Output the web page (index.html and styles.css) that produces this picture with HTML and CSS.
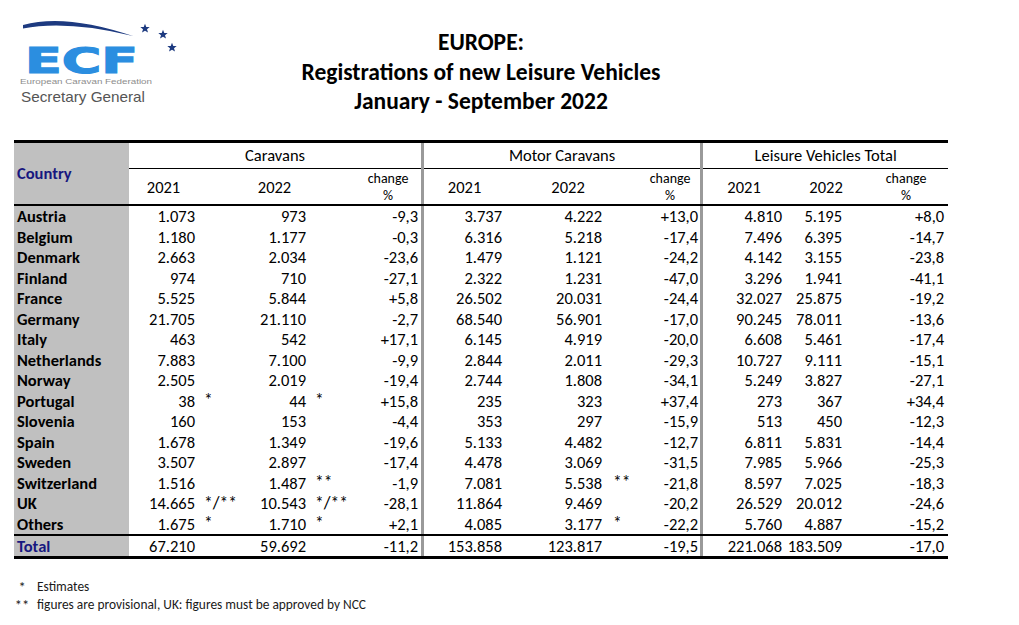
FILE: index.html
```html
<!DOCTYPE html>
<html lang="en">
<head>
<meta charset="utf-8">
<title>ECF - Registrations of new Leisure Vehicles</title>
<link rel="stylesheet" href="styles.css">
</head>
<body>
<div class="page">
  <header class="top">
    <div class="logo">
      <svg class="logo-svg" width="175" height="95" viewBox="0 0 175 95" xmlns="http://www.w3.org/2000/svg">
        <path d="M8,10 Q50,-2 118,21 Q52,5 8,13.5 Z" fill="#1d3a80"/>
        <polygon fill="#1d3a80" points="130,8.8 131.3,12 134.7,12.1 132,14.3 133,17.6 130,15.7 127,17.6 128,14.3 125.3,12.1 128.7,12"/>
        <polygon fill="#1d3a80" points="148,14.8 149.3,18 152.7,18.1 150,20.3 151,23.6 148,21.7 145,23.6 146,20.3 143.3,18.1 146.7,18"/>
        <polygon fill="#1d3a80" points="157,27.8 158.3,31 161.7,31.1 159,33.3 160,36.6 157,34.7 154,36.6 155,33.3 152.3,31.1 155.7,31"/>
        <text x="10" y="58" class="ecf" textLength="113" lengthAdjust="spacingAndGlyphs">ECF</text>
        <text x="5" y="69" class="ecf-sub" textLength="132" lengthAdjust="spacingAndGlyphs">European Caravan Federation</text>
        <text x="6" y="86.5" class="sec" textLength="124" lengthAdjust="spacingAndGlyphs">Secretary General</text>
      </svg>
    </div>
    <h1 class="title">EUROPE:<br>Registrations of new Leisure Vehicles<br>January - September 2022</h1>
  </header>

  <table class="reg">
    <colgroup>
      <col class="w-country"><col class="w69"><col class="w42"><col class="w69"><col class="w46"><col class="w66"><col class="w3">
      <col class="w81"><col class="w100"><col class="w35"><col class="w60"><col class="w3">
      <col class="w82"><col class="w60"><col class="w103">
    </colgroup>
    <thead>
      <tr class="h1">
        <th class="country" rowspan="2">Country</th>
        <th class="grp" colspan="5">Caravans</th>
        <th class="sep" rowspan="2"></th>
        <th class="grp" colspan="4">Motor Caravans</th>
        <th class="sep" rowspan="2"></th>
        <th class="grp" colspan="3">Leisure Vehicles Total</th>
      </tr>
      <tr class="h2">
        <th class="yr">2021</th><th></th><th class="yr">2022</th><th></th>
        <th class="chg">change<br>%</th>
        <th class="yr">2021</th><th class="yr m22">2022</th><th></th>
        <th class="chg">change<br>%</th>
        <th class="yr">2021</th><th class="yr l22">2022</th>
        <th class="chg lchg">change<br>%</th>
      </tr>
    </thead>
    <tbody>
      <tr><th>Austria</th><td class="n">1.073</td><td class="m"></td><td class="n">973</td><td class="m"></td><td class="c">-9,3</td><td class="sep"></td><td class="n">3.737</td><td class="n">4.222</td><td class="m"></td><td class="c mc">+13,0</td><td class="sep"></td><td class="n">4.810</td><td class="n">5.195</td><td class="c lc">+8,0</td></tr>
      <tr><th>Belgium</th><td class="n">1.180</td><td class="m"></td><td class="n">1.177</td><td class="m"></td><td class="c">-0,3</td><td class="sep"></td><td class="n">6.316</td><td class="n">5.218</td><td class="m"></td><td class="c mc">-17,4</td><td class="sep"></td><td class="n">7.496</td><td class="n">6.395</td><td class="c lc">-14,7</td></tr>
      <tr><th>Denmark</th><td class="n">2.663</td><td class="m"></td><td class="n">2.034</td><td class="m"></td><td class="c">-23,6</td><td class="sep"></td><td class="n">1.479</td><td class="n">1.121</td><td class="m"></td><td class="c mc">-24,2</td><td class="sep"></td><td class="n">4.142</td><td class="n">3.155</td><td class="c lc">-23,8</td></tr>
      <tr><th>Finland</th><td class="n">974</td><td class="m"></td><td class="n">710</td><td class="m"></td><td class="c">-27,1</td><td class="sep"></td><td class="n">2.322</td><td class="n">1.231</td><td class="m"></td><td class="c mc">-47,0</td><td class="sep"></td><td class="n">3.296</td><td class="n">1.941</td><td class="c lc">-41,1</td></tr>
      <tr><th>France</th><td class="n">5.525</td><td class="m"></td><td class="n">5.844</td><td class="m"></td><td class="c">+5,8</td><td class="sep"></td><td class="n">26.502</td><td class="n">20.031</td><td class="m"></td><td class="c mc">-24,4</td><td class="sep"></td><td class="n">32.027</td><td class="n">25.875</td><td class="c lc">-19,2</td></tr>
      <tr><th>Germany</th><td class="n">21.705</td><td class="m"></td><td class="n">21.110</td><td class="m"></td><td class="c">-2,7</td><td class="sep"></td><td class="n">68.540</td><td class="n">56.901</td><td class="m"></td><td class="c mc">-17,0</td><td class="sep"></td><td class="n">90.245</td><td class="n">78.011</td><td class="c lc">-13,6</td></tr>
      <tr><th>Italy</th><td class="n">463</td><td class="m"></td><td class="n">542</td><td class="m"></td><td class="c">+17,1</td><td class="sep"></td><td class="n">6.145</td><td class="n">4.919</td><td class="m"></td><td class="c mc">-20,0</td><td class="sep"></td><td class="n">6.608</td><td class="n">5.461</td><td class="c lc">-17,4</td></tr>
      <tr><th>Netherlands</th><td class="n">7.883</td><td class="m"></td><td class="n">7.100</td><td class="m"></td><td class="c">-9,9</td><td class="sep"></td><td class="n">2.844</td><td class="n">2.011</td><td class="m"></td><td class="c mc">-29,3</td><td class="sep"></td><td class="n">10.727</td><td class="n">9.111</td><td class="c lc">-15,1</td></tr>
      <tr><th>Norway</th><td class="n">2.505</td><td class="m"></td><td class="n">2.019</td><td class="m"></td><td class="c">-19,4</td><td class="sep"></td><td class="n">2.744</td><td class="n">1.808</td><td class="m"></td><td class="c mc">-34,1</td><td class="sep"></td><td class="n">5.249</td><td class="n">3.827</td><td class="c lc">-27,1</td></tr>
      <tr><th>Portugal</th><td class="n">38</td><td class="m">*</td><td class="n">44</td><td class="m">*</td><td class="c">+15,8</td><td class="sep"></td><td class="n">235</td><td class="n">323</td><td class="m"></td><td class="c mc">+37,4</td><td class="sep"></td><td class="n">273</td><td class="n">367</td><td class="c lc">+34,4</td></tr>
      <tr><th>Slovenia</th><td class="n">160</td><td class="m"></td><td class="n">153</td><td class="m"></td><td class="c">-4,4</td><td class="sep"></td><td class="n">353</td><td class="n">297</td><td class="m"></td><td class="c mc">-15,9</td><td class="sep"></td><td class="n">513</td><td class="n">450</td><td class="c lc">-12,3</td></tr>
      <tr><th>Spain</th><td class="n">1.678</td><td class="m"></td><td class="n">1.349</td><td class="m"></td><td class="c">-19,6</td><td class="sep"></td><td class="n">5.133</td><td class="n">4.482</td><td class="m"></td><td class="c mc">-12,7</td><td class="sep"></td><td class="n">6.811</td><td class="n">5.831</td><td class="c lc">-14,4</td></tr>
      <tr><th>Sweden</th><td class="n">3.507</td><td class="m"></td><td class="n">2.897</td><td class="m"></td><td class="c">-17,4</td><td class="sep"></td><td class="n">4.478</td><td class="n">3.069</td><td class="m"></td><td class="c mc">-31,5</td><td class="sep"></td><td class="n">7.985</td><td class="n">5.966</td><td class="c lc">-25,3</td></tr>
      <tr><th>Switzerland</th><td class="n">1.516</td><td class="m"></td><td class="n">1.487</td><td class="m">**</td><td class="c">-1,9</td><td class="sep"></td><td class="n">7.081</td><td class="n">5.538</td><td class="m mm">**</td><td class="c mc">-21,8</td><td class="sep"></td><td class="n">8.597</td><td class="n">7.025</td><td class="c lc">-18,3</td></tr>
      <tr><th>UK</th><td class="n">14.665</td><td class="m">*/**</td><td class="n">10.543</td><td class="m">*/**</td><td class="c">-28,1</td><td class="sep"></td><td class="n">11.864</td><td class="n">9.469</td><td class="m"></td><td class="c mc">-20,2</td><td class="sep"></td><td class="n">26.529</td><td class="n">20.012</td><td class="c lc">-24,6</td></tr>
      <tr class="last"><th>Others</th><td class="n">1.675</td><td class="m">*</td><td class="n">1.710</td><td class="m">*</td><td class="c">+2,1</td><td class="sep"></td><td class="n">4.085</td><td class="n">3.177</td><td class="m mm">*</td><td class="c mc">-22,2</td><td class="sep"></td><td class="n">5.760</td><td class="n">4.887</td><td class="c lc">-15,2</td></tr>
    </tbody>
    <tfoot>
      <tr class="total"><th>Total</th><td class="n">67.210</td><td class="m"></td><td class="n">59.692</td><td class="m"></td><td class="c">-11,2</td><td class="sep"></td><td class="n">153.858</td><td class="n">123.817</td><td class="m"></td><td class="c mc">-19,5</td><td class="sep"></td><td class="n">221.068</td><td class="n">183.509</td><td class="c lc">-17,0</td></tr>
    </tfoot>
  </table>

  <ul class="notes">
    <li><span class="mark">*</span><span>Estimates</span></li>
    <li><span class="mark">**</span><span>figures are provisional, UK: figures must be approved by NCC</span></li>
  </ul>
</div>
</body>
</html>
```

FILE: styles.css
```css
html, body {
  margin: 0;
  padding: 0;
  background: #ffffff;
}

.page {
  width: 1019px;
  font-family: Carlito, Calibri, Lato, "Liberation Sans", sans-serif;
  color: #000;
}

/* ---------- header ---------- */
.top {
  display: flex;
  height: 140px;
}

.logo {
  width: 266px;
  padding-left: 15px;
  padding-top: 15px;
  box-sizing: border-box;
}

.logo-svg {
  display: block;
}

.ecf {
  font-family: "DejaVu Sans", sans-serif;
  font-weight: bold;
  font-size: 35px;
  fill: #2b8ee0;
  stroke: #2b8ee0;
  stroke-width: 1.2px;
}

.ecf-sub {
  font-family: "Liberation Sans", sans-serif;
  font-size: 7.5px;
  fill: #8d8d8d;
}

.sec {
  font-family: "Liberation Sans", sans-serif;
  font-size: 15px;
  fill: #555555;
}

.title {
  margin: 0;
  width: 430px;
  padding-top: 28px;
  text-align: center;
  font-size: 23.5px;
  font-weight: bold;
  line-height: 29.5px;
}

/* ---------- table ---------- */
.reg {
  margin-left: 14px;
  width: 934px;
  table-layout: fixed;
  border-collapse: separate;
  border-spacing: 0;
  border-top: 3px solid #000;
  border-bottom: 3px solid #000;
  font-size: 16.5px;
  line-height: 1;
}

.w-country { width: 115px; }
.w3 { width: 3px; }
.w35 { width: 35px; }
.w42 { width: 42px; }
.w46 { width: 46px; }
.w60 { width: 60px; }
.w66 { width: 66px; }
.w69 { width: 69px; }
.w81 { width: 81px; }
.w82 { width: 82px; }
.w100 { width: 100px; }
.w103 { width: 103px; }

.reg th,
.reg td {
  padding: 0;
  white-space: nowrap;
  overflow: visible;
  font-weight: normal;
}

.reg .sep {
  background: #9a9a9a;
}

.reg thead .h1 { height: 26px; }
.reg thead .h2 { height: 37px; }

.reg thead .grp {
  border-bottom: 1px solid #000;
  text-align: center;
  font-size: 16.5px;
}

.reg thead .h2 th,
.reg thead .country,
.reg thead .sep {
  border-bottom: 2px solid #000;
}

.reg .country {
  background: #c0c0c0;
  color: #17177f;
  font-weight: bold;
  text-align: left;
  padding-left: 3px;
}

.reg .yr {
  text-align: center;
  padding-top: 1px;
}

.reg .m22 { padding-left: 26px; }
.reg .l22 { padding-left: 22px; }

.reg .chg {
  text-align: center;
  font-size: 14px;
  line-height: 17px;
}

.reg .lchg { padding-left: 19px; }

.reg tbody tr { height: 20.5px; }
.reg tbody tr.last { height: 22.5px; }

.reg tbody th,
.reg tfoot th {
  background: #c0c0c0;
  font-weight: bold;
  text-align: left;
  padding-left: 3px;
}

.reg tbody tr.last th,
.reg tbody tr.last td {
  border-bottom: 2px solid #000;
}

.reg .n {
  text-align: right;
  padding-right: 3px;
}

.reg .m {
  text-align: left;
  padding-left: 6px;
  font-size: 17.5px;
}

.reg .mm { padding-left: 8px; }

.reg .c {
  text-align: right;
  padding-right: 3px;
}

.reg .mc { padding-right: 2px; }
.reg .lc { padding-right: 4px; }

.reg tfoot tr.total { height: 19.5px; }

.reg tfoot th {
  color: #17177f;
}

/* ---------- notes ---------- */
.notes {
  list-style: none;
  margin: 19px 0 0 12px;
  padding: 0;
  font-size: 13.4px;
  line-height: 18px;
  color: #1a1a1a;
}

.notes li {
  display: flex;
}

.notes .mark {
  width: 20px;
  text-align: center;
  margin-right: 5px;
  font-size: 14.5px;
}
```
